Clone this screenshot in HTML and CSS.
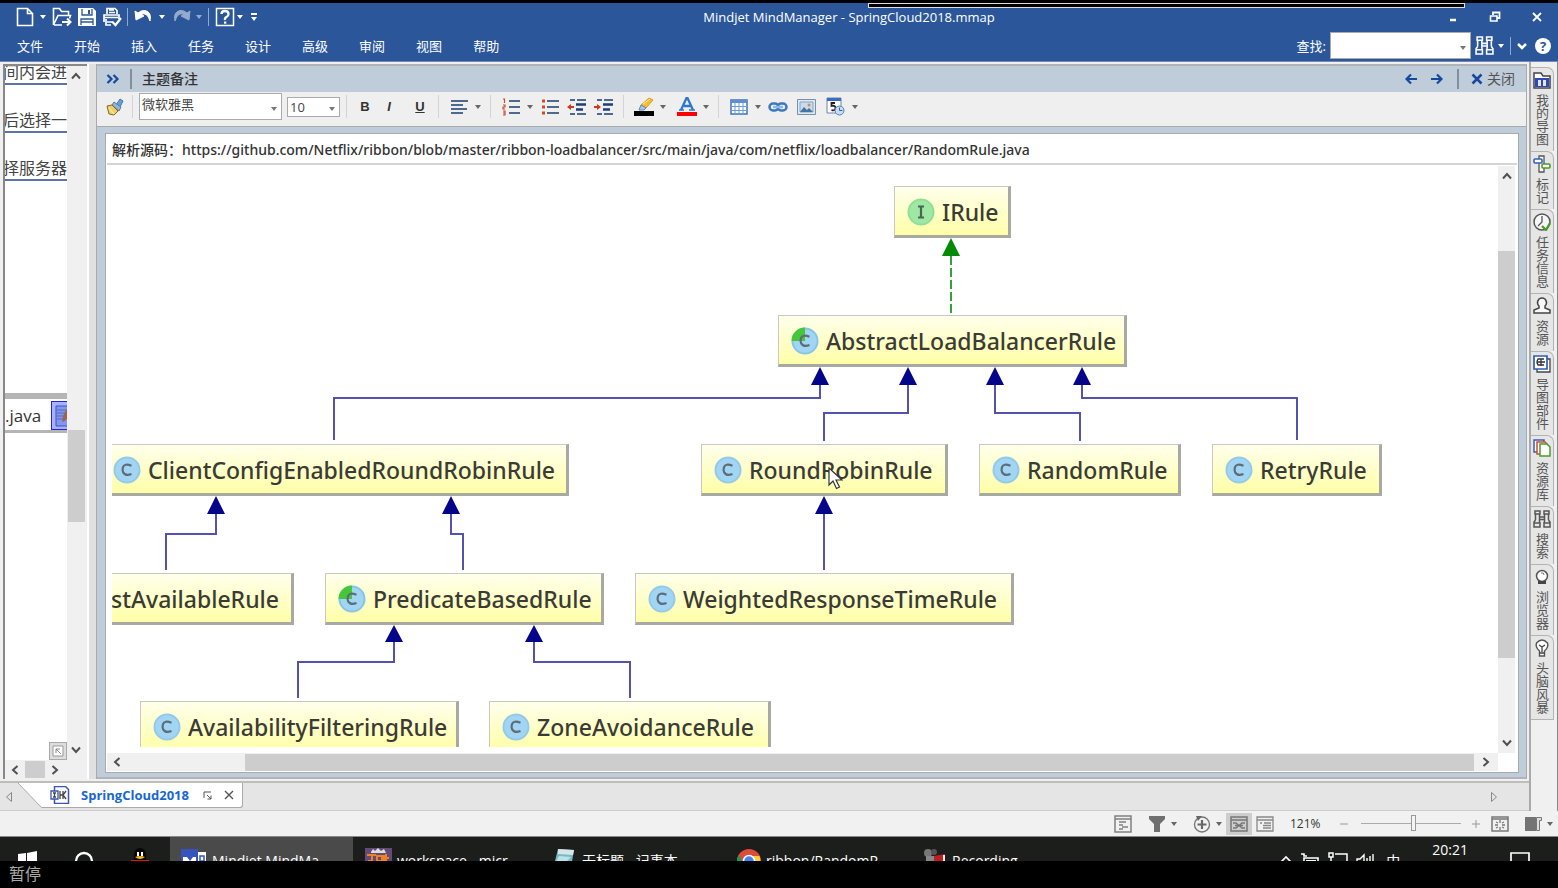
FILE: index.html
```html
<!DOCTYPE html>
<html lang="zh-CN">
<head>
<meta charset="utf-8">
<title>Mindjet MindManager - SpringCloud2018.mmap</title>
<link rel="stylesheet" href="styles.css">
</head>
<body>
<svg class="defs" aria-hidden="true">
  <symbol id="binoculars" viewBox="0 0 18 18"><path d="M2 1h5v3H2zM11 1h5v3h-5zM2.500 4v6M6.500 4v8M11.500 4v8M15.500 4v6M2.500 10L1 12v5h6v-5M15.500 10l1.500 2v5h-6v-5M6.500 7h5M6.500 9.500h5M1 13h6M11 13h6" fill="none" stroke="currentColor" stroke-width="1.500"/></symbol>
  <symbol id="class-icon" viewBox="0 0 28 28"><circle cx="14" cy="14" r="13.500" fill="#92cbea"/><circle cx="14" cy="14" r="11.500" fill="#a2d5f3"/><path d="M18.500 9.700q-7-2.700-8.500 1.500q-1 3 .2 5.200q2.300 4 8.300 1.600" fill="none" stroke="#5d6d78" stroke-width="2.200"/></symbol>
  <symbol id="abstract-icon" viewBox="0 0 28 28"><circle cx="14" cy="14" r="13.500" fill="#86c5ea"/><circle cx="14" cy="14" r="11.500" fill="#a2d5f3"/><path d="M14 14H.500A13.500 13.500 0 0 1 14 .500z" fill="#46c63a"/><path d="M18.500 9.700q-7-2.700-8.500 1.500q-1 3 .2 5.200q2.300 4 8.300 1.600" fill="none" stroke="#5d6d78" stroke-width="2.200"/></symbol>
  <symbol id="interface-icon" viewBox="0 0 28 28"><circle cx="14" cy="14" r="13.500" fill="#8fdf95"/><circle cx="14" cy="14" r="11.500" fill="#9ee8a4"/><path d="M11 8.500h6M11 19.500h6M14 8.500v11" stroke="#4a6650" stroke-width="2.200"/></symbol>
  <symbol id="up" viewBox="0 0 10 10"><path d="M1 7.500 5 3l4 4.500" fill="none" stroke="#505050" stroke-width="2"/></symbol>
  <symbol id="down" viewBox="0 0 10 10"><path d="M1 2.500 5 7l4-4.500" fill="none" stroke="#505050" stroke-width="2"/></symbol>
  <symbol id="left" viewBox="0 0 10 10"><path d="M7.500 1 3 5l4.500 4" fill="none" stroke="#505050" stroke-width="2"/></symbol>
  <symbol id="right" viewBox="0 0 10 10"><path d="M2.500 1 7 5 2.500 9" fill="none" stroke="#505050" stroke-width="2"/></symbol>
</svg>

<header class="app-header">
  <div class="capture-edge"></div>
  <div class="title-row">
    <div class="quick-access">
      <button class="qa" aria-label="新建"><svg width="18" height="20" viewBox="0 0 18 20"><path d="M1.500 1.500h10l5 5v12h-15zM11.500 1.500v5h5" fill="none" stroke="#fff" stroke-width="1.600"/></svg></button>
      <button class="qa-caret" aria-label="新建选项"></button>
      <button class="qa" aria-label="打开"><svg width="20" height="20" viewBox="0 0 20 20"><path d="M1.500 18V1.500h6l2 3h7v4M1.500 18 6 8.500h12.500l-1 3M2 18h8" fill="none" stroke="#fff" stroke-width="1.600"/><path d="M10 15h8M15 11.500l3.500 3.500-3.500 3.500" fill="none" stroke="#fff" stroke-width="2"/></svg></button>
      <button class="qa" aria-label="保存"><svg width="20" height="20" viewBox="0 0 20 20"><path d="M1 1h15l3 3v15H1z" fill="#fff"/><path d="M5 2v6h10V2M4 18v-6h12v6M4 15h12" fill="none" stroke="#2b579a" stroke-width="1.300"/><path d="M11 3h2v4h-2z" fill="#2b579a"/></svg></button>
      <button class="qa" aria-label="打印"><svg width="20" height="20" viewBox="0 0 20 20"><path d="M5 7V1.500h8l2 2V7M7 3h5M7 5.500h6M2 15V8h15v4M2 10.500h14M5 15h5M4 12v6h5" fill="none" stroke="#fff" stroke-width="1.700"/><path d="M10 14.500l3.500 3.500 5.500-7" fill="none" stroke="#fff" stroke-width="2.200"/></svg></button>
      <span class="qa-sep"></span>
      <button class="qa" aria-label="撤消"><svg width="20" height="20" viewBox="0 0 20 20"><path d="M1 4l1 9 8-4-3-1.500q6-3 9 6.500Q18 5 11 3.500 7 3 4 6z" fill="#fff" stroke="#fff"/></svg></button>
      <button class="qa-caret" aria-label="撤消列表"></button>
      <button class="qa dim" aria-label="重做"><svg width="20" height="20" viewBox="0 0 20 20"><path d="M19 4l-1 9-8-4 3-1.500q-6-3-9 6.500Q2 5 9 3.500 13 3 16 6z" fill="#fff" stroke="#fff"/></svg></button>
      <button class="qa-caret dim" aria-label="重做列表"></button>
      <span class="qa-sep"></span>
      <button class="qa" aria-label="帮助"><svg width="20" height="20" viewBox="0 0 20 20"><path d="M1.500 1.500h17v17h-17z" fill="none" stroke="#fff" stroke-width="1.500"/><path d="M6.500 7q0-3 3.500-3t3.500 3q0 2-2 3T10 13" fill="none" stroke="#fff" stroke-width="2.300"/><path d="M9 14.500h2.300v2.200H9z" fill="#fff"/></svg></button>
      <button class="qa-caret tight" aria-label="帮助选项"></button>
      <button class="qa-caret bar" aria-label="自定义快速访问工具栏"></button>
    </div>
    <h1 class="window-title">Mindjet MindManager - SpringCloud2018.mmap</h1>
    <div class="window-buttons">
      <button aria-label="最小化"><svg width="12" height="12"><path d="M3 9h6" stroke="#fff" stroke-width="2.500"/></svg></button>
      <button aria-label="还原"><svg width="12" height="12"><path d="M4 4V1.500h6.500V7H8" fill="none" stroke="#fff" stroke-width="1.800"/><path d="M1.500 5H8v5H1.500z" fill="none" stroke="#fff" stroke-width="1.600"/></svg></button>
      <button aria-label="关闭"><svg width="12" height="12"><path d="M2 2l8 8M10 2l-8 8" stroke="#fff" stroke-width="1.800"/></svg></button>
    </div>
  </div>
  <div class="ribbon-row">
    <nav class="menu">
      <a href="#">文件</a><a href="#">开始</a><a href="#">插入</a><a href="#">任务</a><a href="#">设计</a><a href="#">高级</a><a href="#">审阅</a><a href="#">视图</a><a href="#">帮助</a>
    </nav>
    <div class="search">
      <label for="find">查找:</label>
      <div class="combo find-combo"><input id="find" type="text"></div>
      <button class="find-btn" aria-label="查找"><svg width="19" height="19"><use href="#binoculars"/></svg></button>
      <button class="qa-caret" aria-label="查找选项"></button>
      <span class="qa-sep"></span>
      <button class="fold" aria-label="折叠功能区"><svg width="10" height="8"><path d="M1 2l4 4 4-4" fill="none" stroke="#fff" stroke-width="2.500"/></svg></button>
      <button class="help-btn" aria-label="帮助中心">?</button>
    </div>
  </div>
</header>

<div class="body-row">
  <div class="main-col">
    <div class="workspace">
      <section class="map-pane" aria-label="导图">
        <div class="map-view">
          <p class="topic first"><span>间内会进</span></p>
          <p class="topic"><span>后选择一</span></p>
          <p class="topic"><span>择服务器</span></p>
          <div class="map-space"></div>
          <div class="java-row"><span class="java">.java</span><span class="note-chip"><svg width="15" height="24"><path d="M3 2h14v20H3z" fill="#8296ea" stroke="#3b4fd8"/><path d="M4 6h10M4 9h9M4 12h9M4 15h7" stroke="#5668c8"/><path d="M15 4q-5 5-6 14 4-1 6-5z" fill="#9a6552"/></svg></span></div>
          <div class="map-space-low"><button class="nav-btn" aria-label="导航"><svg width="12" height="12"><path d="M1 1h10v10H1z" fill="#fff" stroke="#999"/><path d="M9 9L4 4M4 8V4h4" fill="none" stroke="#888"/></svg></button></div>
        </div>
        <div class="vscroll map-v">
          <button aria-label="向上"><svg width="10" height="10"><use href="#up"/></svg></button>
          <div class="track"><span class="before"></span><span class="thumb"></span><span class="after"></span></div>
          <button aria-label="向下"><svg width="10" height="10"><use href="#down"/></svg></button>
        </div>
        <div class="hscroll map-h">
          <button aria-label="向左"><svg width="10" height="10"><use href="#left"/></svg></button>
          <span class="thumb"></span>
          <button aria-label="向右"><svg width="10" height="10"><use href="#right"/></svg></button>
        </div>
      </section>
      <div class="splitter"></div>

      <section class="notes">
        <div class="notes-head">
          <button class="expand" aria-label="展开"><svg width="14" height="12"><path d="M1.500 2l4 4-4 4M7.500 2l4 4-4 4" fill="none" stroke="#15489f" stroke-width="2.200"/></svg></button>
          <span class="head-sep"></span>
          <h2>主题备注</h2>
          <button class="arrow" aria-label="上一个"><svg width="12" height="12"><path d="M6 1.500L1.500 6 6 10.500M2 6h10" fill="none" stroke="#15489f" stroke-width="2.200"/></svg></button>
          <button class="arrow" aria-label="下一个"><svg width="12" height="12"><path d="M6 1.500L10.500 6 6 10.500M0 6h10" fill="none" stroke="#15489f" stroke-width="2.200"/></svg></button>
          <span class="head-sep near"></span>
          <button class="close-notes"><svg width="12" height="12"><path d="M1.500 1.500l9 9M10.500 1.500l-9 9" stroke="#15489f" stroke-width="2.500"/></svg>关闭</button>
        </div>

        <div class="toolbar">
          <button class="brush" aria-label="格式刷"><svg width="18" height="18"><path d="M10 7L14 1l3 2-3 6z" fill="#6d9fd6" stroke="#4675ad"/><path d="M8 4l7 5-2 4-7-6z" fill="#8db6df" stroke="#5a7a9a"/><path d="M1 8l5-1 6 6-4 4-5-1z" fill="#f0cf6a" stroke="#7f6a25"/><path d="M3 10l5 6" stroke="#fff3b8"/></svg></button>
          <span class="tsep"></span>
          <div class="combo font-combo"><select aria-label="字体"><option>微软雅黑</option></select></div>
          <div class="combo size-combo"><select aria-label="字号"><option>10</option></select></div>
          <span class="tsep"></span>
          <button class="fmt"><b>B</b></button>
          <button class="fmt"><i>I</i></button>
          <button class="fmt under"><u>U</u></button>
          <span class="tsep"></span>
          <button class="tool" aria-label="对齐"><svg width="18" height="18"><path d="M1 3h17M1 7h12M1 11h16M1 15h12" stroke="#4d6a8c" stroke-width="2"/></svg></button>
          <button class="caret" aria-label="对齐选项"></button>
          <span class="tsep"></span>
          <button class="tool" aria-label="编号"><svg width="18" height="18"><path d="M7 3h11M7 9h11M7 15h11" stroke="#4d6a8c" stroke-width="2"/><path d="M1 1h1.500v4M1 7h2v2H1v2h2M1 13h2v4H1M1 15h2" fill="none" stroke="#cf4a23" stroke-width="1.200"/></svg></button>
          <button class="caret" aria-label="编号选项"></button>
          <button class="tool" aria-label="项目符号"><svg width="18" height="18"><path d="M6 3h12M6 9h12M6 15h12" stroke="#4d6a8c" stroke-width="2"/><path d="M1 3h3M1 9h3M1 15h3" stroke="#cf4a23" stroke-width="3"/></svg></button>
          <button class="tool" aria-label="减少缩进"><svg width="20" height="18"><path d="M3 2h5M10 2h9M3 16h5M10 16h9" stroke="#4d6a8c" stroke-width="2"/><path d="M9 6.500h10M9 11.500h7" stroke="#1d3f78" stroke-width="2.500"/><path d="M0 9l4-3v2h3v2H4v2z" fill="#cf3b18"/></svg></button>
          <button class="tool" aria-label="增加缩进"><svg width="20" height="18"><path d="M3 2h5M10 2h9M3 16h5M10 16h9" stroke="#4d6a8c" stroke-width="2"/><path d="M9 6.500h10M9 11.500h7" stroke="#1d3f78" stroke-width="2.500"/><path d="M7 9L3 6v2H0v2h3v2z" fill="#cf3b18"/></svg></button>
          <span class="tsep"></span>
          <button class="tool" aria-label="突出显示"><svg width="20" height="20"><path d="M0 14h20v5H0z"/><path d="M7 8l8-7 4 2-7 8z" fill="#f8bd36" stroke="#e19b1c"/><path d="M7 8l5 3-2 2-5 0z" fill="#a8c9e8" stroke="#5b86b5"/><path d="M9 7l7-5" stroke="#ffe9a5"/></svg></button>
          <button class="caret" aria-label="突出显示颜色"></button>
          <button class="tool wide" aria-label="字体颜色"><svg width="20" height="20"><path d="M0 15h20v4H0z" fill="#f00"/><path d="M4 13L9.500 1h1L16 13M7 9h7" fill="none" stroke="#2d78cc" stroke-width="2.300"/><path d="M2 13h5M12 13h6" stroke="#2d78cc" stroke-width="1.500"/></svg></button>
          <button class="caret" aria-label="字体颜色选项"></button>
          <span class="tsep"></span>
          <button class="tool" aria-label="表格"><svg width="18" height="18"><path d="M1 2h16v14H1z" fill="#fff" stroke="#3f74bd" stroke-width="1.500"/><path d="M1 2h16v3H1z" fill="#5d8fd3"/><path d="M1 8.500h16M1 12.500h16M5 4v12M9 4v12M13 4v12" stroke="#6b9cdc"/></svg></button>
          <button class="caret" aria-label="表格选项"></button>
          <button class="tool" aria-label="链接"><svg width="20" height="18"><rect x="1.500" y="5.500" width="9" height="7" rx="3.500" fill="none" stroke="#3e78be" stroke-width="2.500"/><rect x="9.500" y="5.500" width="9" height="7" rx="3.500" fill="none" stroke="#3e78be" stroke-width="2.500"/><path d="M5 9h10" stroke="#8bb9ec" stroke-width="2.500"/></svg></button>
          <button class="tool gap" aria-label="图片"><svg width="19" height="18"><path d="M.500 1.500h18v15H.500z" fill="#dfe9f3" stroke="#7791ab"/><path d="M3 4h13v10H3z" fill="#c4ddf3" stroke="#89a3bd"/><path d="M3 14l4-5 3 3 2-2 4 4z" fill="#48739a"/><circle cx="12" cy="7" r="1.500" fill="#e9863e"/></svg></button>
          <button class="tool gap" aria-label="日期和时间"><svg width="19" height="19"><path d="M1 1h14v15H1z" fill="#fff" stroke="#6d84a5"/><path d="M1 1h14v3H1z" fill="#3a6cc4"/><path d="M9 6H5.500v3q4-1 4 2t-4 2.200" fill="none" stroke="#222" stroke-width="1.800"/><circle cx="13.500" cy="13.500" r="4.500" fill="#c6def5" stroke="#5880ae"/><path d="M13.500 10.500v3h3" fill="none" stroke="#37669d"/></svg></button>
          <button class="caret" aria-label="日期选项"></button>
        </div>

        <div class="notes-body">
          <p class="source-line">解析源码：https://github.com/Netflix/ribbon/blob/master/ribbon-loadbalancer/src/main/java/com/netflix/loadbalancer/RandomRule.java</p>
          <div class="view-row">
            <div class="diagram">
              <svg class="edges" width="1384" height="582" viewBox="112 166 1384 582">
                <g fill="none" stroke="#5353ae" stroke-width="2">
                  <path d="M820 384v14H334v42M908 384v29h-84v28M995 384v29h85v28M1082 384v14h215v42M216 513v21h-50v36M451 513v21h12v36M824 513v57M394 642v20h-96v36M534 642v20h96v36"/>
                </g>
                <path d="M951 256v58" stroke="#38a038" stroke-width="2" stroke-dasharray="9 3"/>
                <path d="M951 238l9 18h-18z" fill="#058a05"/>
                <path d="M820 367l9 18h-18zM908 367l9 18h-18zM995 367l9 18h-18zM1082 367l9 18h-18zM216 496l9 18h-18zM451 496l9 18h-18zM824 496l9 18h-18zM394 625l9 17h-18zM534 625l9 17h-18z" fill="#05058a"/>
              </svg>
              <div class="node n-irule"><svg><use href="#interface-icon"/></svg>IRule</div>
              <div class="node n-abstract"><svg><use href="#abstract-icon"/></svg>AbstractLoadBalancerRule</div>
              <div class="node n-client"><svg><use href="#class-icon"/></svg>ClientConfigEnabledRoundRobinRule</div>
              <div class="node n-round"><svg><use href="#class-icon"/></svg>RoundRobinRule</div>
              <div class="node n-random"><svg><use href="#class-icon"/></svg>RandomRule</div>
              <div class="node n-retry"><svg><use href="#class-icon"/></svg>RetryRule</div>
              <div class="node n-best"><svg><use href="#class-icon"/></svg>BestAvailableRule</div>
              <div class="node n-predicate"><svg><use href="#abstract-icon"/></svg>PredicateBasedRule</div>
              <div class="node n-weighted"><svg><use href="#class-icon"/></svg>WeightedResponseTimeRule</div>
              <div class="node n-avail"><svg><use href="#class-icon"/></svg>AvailabilityFilteringRule</div>
              <div class="node n-zone"><svg><use href="#class-icon"/></svg>ZoneAvoidanceRule</div>
              <svg class="pointer" width="15" height="23"><path d="M1 1v17l4-4 3.500 7.500 3-1.500L8 13h6z" fill="#fff" stroke="#333" stroke-width="1.200"/></svg>
            </div>
            <div class="vscroll notes-v">
              <button aria-label="向上滚动"><svg width="10" height="10"><use href="#up"/></svg></button>
              <div class="track"><span class="before"></span><span class="thumb"></span><span class="after"></span></div>
              <button aria-label="向下滚动"><svg width="10" height="10"><use href="#down"/></svg></button>
            </div>
          </div>
          <div class="hscroll notes-h">
            <button aria-label="向左滚动"><svg width="10" height="10"><use href="#left"/></svg></button>
            <div class="track"><span class="before"></span><span class="thumb"></span></div>
            <button aria-label="向右滚动"><svg width="10" height="10"><use href="#right"/></svg></button>
          </div>
        </div>
      </section>
    </div>

    <div class="doc-tabs">
      <button class="tab-scroll" aria-label="上一标签"><svg width="8" height="12"><path d="M6.500 1.500v9L1.500 6z" fill="none" stroke="#888"/></svg></button>
      <svg class="slope" width="24" height="25"><path d="M0 0l23 24h1V0z" fill="#fff"/><path d="M0 0l23.500 24.500h1" fill="none" stroke="#aaa"/></svg>
      <div class="doc-tab">
        <svg width="20" height="18"><path d="M4.500.500h11l3 3v14h-14z" fill="#fff" stroke="#3b55b5" stroke-width="1.500"/><path d="M1 5h7v8H1z" fill="#fff" stroke="#3b55b5" stroke-width="1.300"/><path d="M3 7h3M3 11h3M4.500 7v4M10 5v8M10 9h3M16 5l-3 4 3 4M13 5v8" fill="none" stroke="#444" stroke-width="1.300"/></svg>
        <a href="#">SpringCloud2018</a>
        <button class="restore" aria-label="还原窗口"><svg width="10" height="9"><path d="M1 7V1h7M4 4l4 4M8 4.500V8H4.500" fill="none" stroke="#555"/></svg></button>
        <button aria-label="关闭文档"><svg width="10" height="10"><path d="M1 1l8 8M9 1L1 9" stroke="#555" stroke-width="1.400"/></svg></button>
      </div>
      <button class="tab-scroll end" aria-label="下一标签"><svg width="8" height="12"><path d="M1.500 1.500v9L6.500 6z" fill="none" stroke="#888"/></svg></button>
    </div>
  </div>

  <aside class="side">
    <button><svg width="18" height="18"><path d="M1 17V2h7l2 3h7v12z" fill="#fff" stroke="#444" stroke-width="1.500"/><path d="M2 7h14v9H2z" fill="#2f49b5"/><path d="M5 9h3v6H5zM10 9h3v6h-3z" fill="#dfe5ff"/></svg><span>我的导图</span></button>
    <button><svg width="18" height="18"><path d="M6 1h5v16H6z" fill="#fff" stroke="#555" stroke-width="1.300"/><rect x="1" y="4" width="8" height="4" rx="1" fill="#fff" stroke="#3560b8" stroke-width="1.600"/><rect x="9" y="9" width="8" height="4" rx="1" fill="#fff" stroke="#4c9a2a" stroke-width="1.600"/></svg><span>标记</span></button>
    <button><svg width="18" height="18"><circle cx="9" cy="9" r="8" fill="#f6f6f6" stroke="#555" stroke-width="1.500"/><path d="M9 3v6l-4 4" fill="none" stroke="#555" stroke-width="1.300"/><path d="M9 13l4 4 4-7" fill="none" stroke="#4c9a2a" stroke-width="2.300"/></svg><span>任务信息</span></button>
    <button><svg width="18" height="18"><path d="M1 16v-3l5-2V9Q3 6 6 2q3-2 6 0 3 4 0 7v2l5 2v3z" fill="#f8f8f8" stroke="#444" stroke-width="1.500"/></svg><span>资源</span></button>
    <button><svg width="18" height="18"><path d="M4 4h13v13H4z" fill="#fff" stroke="#444" stroke-width="1.300"/><path d="M1 1h13v13H1z" fill="#fff" stroke="#2f5db5" stroke-width="1.700"/><path d="M8 4v7M8 4H5q-2 3 0 6h3M4 7h8M8 4h3M8 10h3" fill="none" stroke="#333" stroke-width="1.300"/></svg><span>导图部件</span></button>
    <button><svg width="18" height="18"><path d="M1 1h10v12H1z" fill="#fff" stroke="#3560b8" stroke-width="1.500"/><path d="M4 3h8l2 2v10H4z" fill="#fff" stroke="#d8482f" stroke-width="1.500"/><path d="M7 5h7l3 3v9H7z" fill="#fff" stroke="#4c9a2a" stroke-width="1.500"/></svg><span>资源库</span></button>
    <button><svg width="18" height="18"><use href="#binoculars"/></svg><span>搜索</span></button>
    <button><svg width="18" height="18"><circle cx="9" cy="8" r="5.500" fill="#fff" stroke="#555" stroke-width="1.500"/><path d="M8 5q3-1 3 2" fill="none" stroke="#777"/><path d="M5 13h8v3H5z" fill="#444"/></svg><span>浏览器</span></button>
    <button><svg width="18" height="18"><path d="M6.500 12Q2 8 3.500 4 9-2 14.500 4 16 8 11.500 12v5h-5z" fill="#fff" stroke="#555" stroke-width="1.400"/><path d="M6 6l3 2 3-2M9 8v5M6.500 14h5" fill="none" stroke="#444" stroke-width="1.300"/></svg><span>头脑风暴</span></button>
  </aside>
</div>

<div class="status">
  <button aria-label="备注"><svg width="18" height="18"><path d="M1 1h16v16H1zM1 4h16M5 7h7M5 10h4M8 12h6M5 14h4" fill="none" stroke="#808080" stroke-width="1.500"/></svg></button>
  <button class="drop s1" aria-label="筛选"><svg width="18" height="18"><path d="M1 1h16v3l-5 5v8H6V9L1 4z" fill="#6f6f6f"/></svg><i></i></button>
  <button class="drop s2" aria-label="详细程度"><svg width="18" height="18"><circle cx="9" cy="9.500" r="7.500" fill="none" stroke="#777" stroke-width="1.400"/><path d="M9 5v9M4.500 9.500h9" stroke="#666" stroke-width="2.200"/><path d="M3 1h6L5 6z" fill="#666"/></svg><i></i></button>
  <button class="on" aria-label="导图视图"><svg width="18" height="18"><path d="M1 2h16v14H1zM1 5h16" fill="none" stroke="#777" stroke-width="1.500"/><path d="M3 8h3l6 5h3M3 13h3l6-5h3M5 10.500h8" fill="none" stroke="#777" stroke-width="1.300"/></svg></button>
  <button class="s3" aria-label="大纲视图"><svg width="18" height="18"><path d="M1 2h16v14H1zM1 5h16M4 8h2M8 8h7M7 10.500h8M7 13h8" fill="none" stroke="#888" stroke-width="1.300"/></svg></button>
  <output class="zoom-value" for="zoom">121%</output>
  <button class="sign" aria-label="缩小"><svg width="10" height="10"><path d="M1 5h8" stroke="#999"/></svg></button>
  <input id="zoom" class="zoom" type="range" min="0" max="100" value="53" aria-label="缩放">
  <button class="sign" aria-label="放大"><svg width="10" height="10"><path d="M1 5h8M5 1v8" stroke="#999"/></svg></button>
  <button class="s4" aria-label="适合窗口"><svg width="18" height="18"><path d="M1 2h16v14H1zM1 4h16" fill="none" stroke="#777" stroke-width="1.500"/><path d="M9 5v3M9 12v3M4 10h3M11 10h3M5 7l2 1M13 7l-2 1M5 13l2-1M13 13l-2-1" stroke="#777" stroke-width="1.300"/></svg></button>
  <button class="drop s5" aria-label="任务窗格"><svg width="18" height="18"><path d="M1 2h11v14H1z" fill="#747474"/><path d="M12.500 2.500h5v3h-2v10h-3z" fill="#ddd" stroke="#777"/></svg><i></i></button>
</div>

<footer class="taskbar">
  <div class="taskbar-inner">
    <button class="sys" aria-label="开始菜单"><svg width="20" height="20"><path d="M0 3l8-1v8H0zM9 2l10-2v10H9zM0 11h8v7l-8-1zM9 11h10v9l-10-2z" fill="#fff"/></svg></button>
    <button class="sys" aria-label="Cortana"><svg width="20" height="20"><circle cx="10" cy="10" r="8" fill="none" stroke="#fff" stroke-width="2.300"/></svg></button>
    <button class="sys" aria-label="QQ"><svg width="22" height="26"><path d="M5 11Q4 0 11 0t6 11l3 8H2z" fill="#080808"/><path d="M8 4h2v4H8zM12 4h2v4h-2z" fill="#fff"/><path d="M6 9q5-2 10 0-5 4-10 0z" fill="#f5b51c"/><path d="M2 12h18v3H2z" fill="#e01616"/></svg></button>
    <button class="task active"><svg width="26" height="24"><path d="M0 0h17v24H0z" fill="#3654bd"/><path d="M17 3h8v20h-8z" fill="#fff"/><path d="M2 8h4l3 4 3-4h3v12H2z" fill="#fff"/><path d="M19 7h4v5h-4z" fill="none" stroke="#3654bd" stroke-width="1.500"/></svg><span>Mindjet MindMa...</span></button>
    <button class="task"><svg width="27" height="26"><path d="M0 0h27v26H0z" fill="#634b77"/><path d="M6 4l2-3 2 2 3-3 3 3 3-2 2 4H6z" fill="#ddd"/><path d="M2 7h9M7 7v6H3M12 8h5v5h-5zM19 7v7h7M19 10h5M21 6v8" fill="none" stroke="#ee8124" stroke-width="2"/></svg><span>workspace - micr...</span></button>
    <button class="task"><svg width="26" height="26"><path d="M7 1l16 1-4 23H1z" fill="#79b8c6"/><path d="M7 1l16 1-1 5-15-1z" fill="#d5e6e8"/><path d="M8 8l12 1-8 8-8-1z" fill="#b9e2e5"/></svg><span>无标题 - 记事本</span></button>
    <button class="task"><svg width="24" height="24" viewBox="0 0 24 24"><circle cx="12" cy="12" r="12" fill="#dd4b39"/><path d="M1.600 6A12 12 0 0 0 12 24l5-9H7z" fill="#179b57"/><path d="M12 24A12 12 0 0 0 22.400 7H12l5 8z" fill="#ffcd42"/><circle cx="12" cy="12" r="5.500" fill="#4285f4" stroke="#fff" stroke-width="1.500"/></svg><span>ribbon/RandomR...</span></button>
    <button class="task"><svg width="24" height="26"><circle cx="5" cy="5" r="4" fill="#777"/><circle cx="11" cy="4" r="3" fill="#555"/><path d="M3 8h9v10H3z" fill="#888"/><path d="M11 8l11-2v16l-11 1z" fill="#bd2023"/><path d="M20 7h2v15h-2z" fill="#eee"/></svg><span>Recording...</span></button>
    <div class="tray">
      <svg width="12" height="16"><path d="M1 9l5-5 5 5" fill="none" stroke="#fff" stroke-width="1.600"/></svg>
      <svg width="20" height="18"><path d="M1 2h3v2h3M4 6h14v8H4z" fill="none" stroke="#fff" stroke-width="1.600"/><path d="M6 8h10v4H6z" fill="#fff"/></svg>
      <svg width="20" height="18"><path d="M1 1h4v4H1zM3 5v9M7 2h12v11H7" fill="none" stroke="#fff" stroke-width="1.500"/></svg>
      <svg width="20" height="18"><path d="M1 7h3l4-4v12l-4-4H1zM11 6v6M14 4v10M17 2v14" fill="none" stroke="#fff" stroke-width="1.400"/></svg>
      <span class="ime">中</span>
      <time>20:21</time>
      <svg class="action" width="20" height="20"><path d="M1 2h18v14H1z" fill="none" stroke="#fff" stroke-width="1.700"/></svg>
    </div>
  </div>
</footer>
<div class="recorder">暂停</div>
</body>
</html>
```

FILE: styles.css
```css
* { box-sizing: border-box; }
body {
  margin: 0;
  min-height: 100vh;
  display: flex;
  flex-direction: column;
  background: #f0f0f0;
  color: #333;
  font: 13px/16px "Open Sans", "Noto Sans CJK SC", sans-serif;
}
h1, h2, p { margin: 0; font-weight: 400; }
a { color: inherit; text-decoration: none; }
button {
  display: flex;
  align-items: center;
  justify-content: center;
  flex: none;
  margin: 0;
  padding: 0;
  border: 0;
  background: none;
  color: inherit;
  font: inherit;
}
svg { display: block; flex: none; }
.defs { position: absolute; width: 0; height: 0; }

/* title bar and ribbon */
.app-header {
  position: relative;
  border-top: 3px solid #000;
  border-bottom: 1px solid #7189b8;
  background: #2b579a;
  color: #fff;
}
.capture-edge {
  position: absolute;
  top: 0;
  right: 93px;
  width: 597px;
  height: 5px;
  border: 1px solid #ddd;
  background: #000;
}
.title-row { display: flex; align-items: center; height: 27px; }
.quick-access { display: flex; align-items: center; padding-left: 12px; width: 266px; }
.qa { width: 25px; }
.dim { opacity: .5; }
.qa-caret { width: 12px; height: 20px; }
.qa-caret::before { content: ""; border: 3px solid transparent; border-top: 4px solid #fff; border-bottom: 0; }
.qa-caret.tight { width: 6px; }
.qa-caret.bar { flex-direction: column; width: 22px; gap: 2px; }
.qa-caret.bar::before { order: 2; }
.qa-caret.bar::after { content: ""; width: 6px; height: 2px; background: #fff; order: 1; }
.qa-sep { width: 1px; height: 18px; margin: 0 3px; background: #91a7cc; }
.window-title { flex: 1; text-align: center; font-size: 13px; }
.window-buttons { display: flex; }
.window-buttons button { width: 42px; height: 26px; }
.ribbon-row { display: flex; align-items: center; justify-content: space-between; height: 31px; padding: 0 7px 0 17px; }
.menu { display: flex; gap: 31px; }
.search { display: flex; align-items: center; }
.combo { position: relative; border: 1px solid #aaa; background: #fff; }
.combo::after {
  content: "";
  position: absolute;
  right: 4px;
  top: 50%;
  border: 3px solid transparent;
  border-top: 4px solid #777;
  border-bottom: 0;
}
.combo input, .combo select {
  display: block;
  width: 100%;
  height: 100%;
  padding: 0 2px;
  border: 0;
  outline: 0;
  background: transparent;
  appearance: none;
  color: #444;
  font: inherit;
}
.find-combo { width: 141px; height: 27px; margin: 0 3px 0 4px; }
.find-btn { width: 21px; }
.fold { width: 16px; }
.help-btn {
  width: 16px;
  height: 16px;
  margin-left: 5px;
  border-radius: 8px;
  background: #fff;
  color: #2b579a;
  font-weight: 700;
}

/* main body */
.body-row { flex: 1; display: flex; border-right: 1px solid #888; }
.main-col { flex: 1; min-width: 0; display: flex; flex-direction: column; }
.workspace { flex: 1; display: flex; padding: 2px 2px 2px 3px; border-bottom: 2px solid #bdbdb9; }

.map-pane {
  display: grid;
  grid-template-columns: 62px 18px;
  grid-template-rows: 1fr 19px;
  width: 84px;
  border-top: 2px solid #888;
  border-left: 2px solid #888;
  background: #f0f0f0;
}
.map-view { display: flex; flex-direction: column; background: #fff; overflow: hidden; }
.topic {
  display: flex;
  justify-content: flex-end;
  align-items: center;
  height: 48px;
  padding-top: 24px;
  border-bottom: 2px solid #5b74a8;
  font-size: 16px;
  line-height: 22px;
  white-space: nowrap;
  color: #444;
}
.topic.first { align-items: flex-end; height: 19px; padding: 0; }
.map-space { height: 218px; border-bottom: 6px solid #b5b5b5; }
.java-row { display: flex; height: 34px; justify-content: space-between; padding-top: 2px; border-bottom: 3px solid #b5b5b5; font-size: 17px; }
.java { flex: 1; padding: 7px 0 0; }
.note-chip { width: 16px; padding: 2px 0 0 1px; border: 1px solid #22f; border-right: 0; background: #a9b1f7; }
.map-space-low { flex: 1; display: flex; align-items: flex-end; justify-content: flex-end; }
.nav-btn { width: 18px; height: 18px; border: 1px solid #aaa; background: #ddd; }
.splitter { width: 10px; border-right: 1px solid #aaa; background: #e0e0e0; border-left: 2px solid #fff; }

.vscroll { display: flex; flex-direction: column; align-items: center; background: #f0f0f0; }
.vscroll button { width: 17px; height: 20px; }
.track { flex: 1; display: flex; }
.vscroll .track { flex-direction: column; width: 17px; }
.thumb { background: #cdcdcd; }
.map-v .before { flex: 344; }
.map-v .thumb { flex: 92; }
.map-v .after { flex: 218; }
.hscroll { display: flex; align-items: center; background: #f0f0f0; }
.hscroll button { width: 20px; height: 17px; }
.map-h { grid-column: 1 / 3; }
.map-h .thumb { width: 20px; height: 17px; }

/* notes window */
.notes {
  flex: 1;
  min-width: 0;
  display: flex;
  flex-direction: column;
  border-top: 2px solid #b0b4ba;
  border-right: 1px solid #aaa;
  border-bottom: 2px solid #b0b4ba;
  background: #bfccda;
}
.notes-head { display: flex; align-items: center; height: 26px; padding: 0 11px 0 10px; }
.notes-head h2 { flex: 1; padding-left: 10px; font-size: 14px; font-weight: 500; }
.expand { width: 12px; }
.head-sep { width: 2px; height: 20px; margin-left: 11px; background: #858f9b; }
.head-sep.near { margin-left: 7px; }
.arrow { width: 26px; }
.close-notes { gap: 4px; margin-left: 12px; font-size: 14px; color: #555; }
.toolbar {
  display: flex;
  align-items: center;
  height: 35px;
  padding: 0 7px 5px;
  border-bottom: 1px solid #aaa;
  background: #efefef;
}
.brush { width: 22px; }
.tsep { width: 1px; height: 23px; margin: 0 6px; background: #d4d4d4; }
.font-combo { width: 143px; height: 27px; line-height: 18px; }
.font-combo select { height: 20px; }
.size-combo { width: 53px; height: 20px; margin-left: 5px; }
.fmt { width: 24px; height: 22px; font: 700 13px/16px "Liberation Sans", sans-serif; }
.under { margin-left: 7px; }
.tool { width: 27px; height: 24px; }
.tool.wide { margin-left: 4px; }
.tool.gap { margin-left: 2px; }
.caret { width: 12px; height: 24px; }
.caret::before, .drop i { content: ""; border: 3px solid transparent; border-top: 4px solid #666; border-bottom: 0; }

.notes-body {
  flex: 1;
  display: flex;
  flex-direction: column;
  margin: 6px 7px 4px 8px;
  padding: 1px;
  border: 1px solid #aaa;
  background: #fff;
}
.source-line {
  height: 30px;
  padding-left: 5px;
  border-bottom: 2px solid #d4d4d4;
  line-height: 30px;
  font-family: "Noto Sans", "Noto Sans CJK SC", sans-serif;
  font-size: 14px;
  font-weight: 500;
  white-space: nowrap;
}
.view-row { flex: 1; display: flex; margin: 1px 2px 0 0; }
.diagram { position: relative; flex: 1; margin: 0 2px 6px 5px; overflow: hidden; }
.edges { position: absolute; left: 0; top: 0; }
.node {
  position: absolute;
  display: flex;
  align-items: center;
  gap: 7px;
  height: 52px;
  padding: 1px 12px 0;
  border: 1px solid #c9c9c4;
  border-right: 3px solid #a9a9a4;
  border-bottom: 3px solid #a9a9a4;
  background: linear-gradient(#ffffec, #ffffa8);
  color: #3b3b35;
  font-family: "Noto Sans", sans-serif;
  font-size: 23px;
  font-weight: 500;
  line-height: 32px;
  white-space: nowrap;
}
.node svg { width: 28px; height: 28px; }
.n-irule { left: 782px; top: 20px; width: 117px; }
.n-abstract { left: 666px; top: 149px; width: 349px; }
.n-client { left: -12px; top: 278px; width: 469px; }
.n-round { left: 589px; top: 278px; width: 247px; }
.n-random { left: 867px; top: 278px; width: 202px; }
.n-retry { left: 1100px; top: 278px; width: 170px; }
.n-best { left: -76px; top: 407px; width: 258px; justify-content: flex-end; }
.n-predicate { left: 213px; top: 407px; width: 279px; }
.n-weighted { left: 523px; top: 407px; width: 379px; }
.n-avail { left: 28px; top: 535px; width: 319px; }
.n-zone { left: 377px; top: 535px; width: 282px; }
.pointer { position: absolute; left: 716px; top: 301px; }
.notes-v { width: 17px; }
.notes-v .before { flex: 65; }
.notes-v .thumb { flex: 406; }
.notes-v .after { flex: 75; }
.notes-h { height: 18px; margin-right: 19px; }
.notes-h .before { flex: 118; }
.notes-h .thumb { flex: 1229; height: 17px; }
.notes-h button { width: 20px; }
.notes-h button:last-child { width: 24px; }

/* document tabs */
.doc-tabs { display: flex; align-items: flex-start; height: 28px; border-bottom: 1px solid #ccc; background: #e5e5e5; }
.tab-scroll { width: 18px; height: 27px; }
.tab-scroll.end { margin: 0 30px 0 auto; width: 10px; }
.doc-tab {
  display: flex;
  align-items: center;
  gap: 11px;
  height: 25px;
  padding: 0 8px;
  border-right: 1px solid #aaa;
  border-bottom: 1px solid #aaa;
  border-radius: 0 0 3px 0;
  background: #fff;
}
.doc-tab a { color: #1767d2; font-weight: 700; }
.restore { margin: 0 0 0 3px; }

/* side tabs */
.side { display: flex; flex-direction: column; width: 28px; padding: 5px 3px 0 0; border-left: 2px solid #aaa; background: #f0f0f0; }
.side button {
  flex-direction: column;
  justify-content: flex-start;
  gap: 5px;
  padding: 3px 0 5px;
  border: 1px solid #b3b3b3;
  border-left: 0;
  border-bottom: 0;
  border-top-right-radius: 7px;
  background: #e6e6e6;
  color: #555;
}
.side button:last-child { border-bottom: 1px solid #b3b3b3; }
.side span { writing-mode: vertical-rl; line-height: 20px; }

/* status bar */
.status {
  display: flex;
  align-items: center;
  justify-content: flex-end;
  height: 26px;
  padding-right: 5px;
  border-bottom: 1px solid #888;
  background: #f1f1f1;
}
.status button { height: 22px; }
.drop { gap: 5px; }
.s1 { margin-left: 16px; }
.s2 { margin: 0 4px 0 16px; }
.status .on { width: 26px; background: #cdcdcd; }
.s3 { margin: 0 16px 0 4px; }
.zoom-value { width: 32px; font-size: 12px; }
.sign { width: 10px; margin: 0 12px 0 17px; }
.zoom { width: 100px; height: 20px; margin: 0; appearance: none; background: transparent; }
.zoom::-webkit-slider-runnable-track { height: 1px; background: #aaa; }
.zoom::-webkit-slider-thumb { appearance: none; width: 5px; height: 16px; margin-top: -8px; border: 1px solid #999; background: #f4f4f4; }
.zoom + .sign { margin: 0 10px 0 10px; }
.s5 { margin-left: 15px; }

/* Windows taskbar, partly covered by the recorder strip */
.taskbar { height: 24px; overflow: hidden; background: #1c1e1b; color: #fff; }
.taskbar-inner { display: flex; align-items: center; height: 48px; }
.sys { width: 56px; }
.task { width: 183px; height: 48px; margin-right: 3px; padding-left: 11px; justify-content: flex-start; gap: 5px; font-size: 14px; line-height: 20px; }
.task.active { margin: 0 1px 0 2px; background: #494a49; }
.tray { display: flex; align-items: center; gap: 8px; height: 48px; margin-left: auto; padding-right: 28px; }
.ime { margin-left: 2px; font-size: 14px; }
time { align-self: flex-start; margin: 5px 34px 0 24px; font-size: 14px; line-height: 16px; }
.recorder { height: 27px; padding-left: 9px; background: #000; color: #aaa; font-size: 16px; line-height: 26px; }
```
